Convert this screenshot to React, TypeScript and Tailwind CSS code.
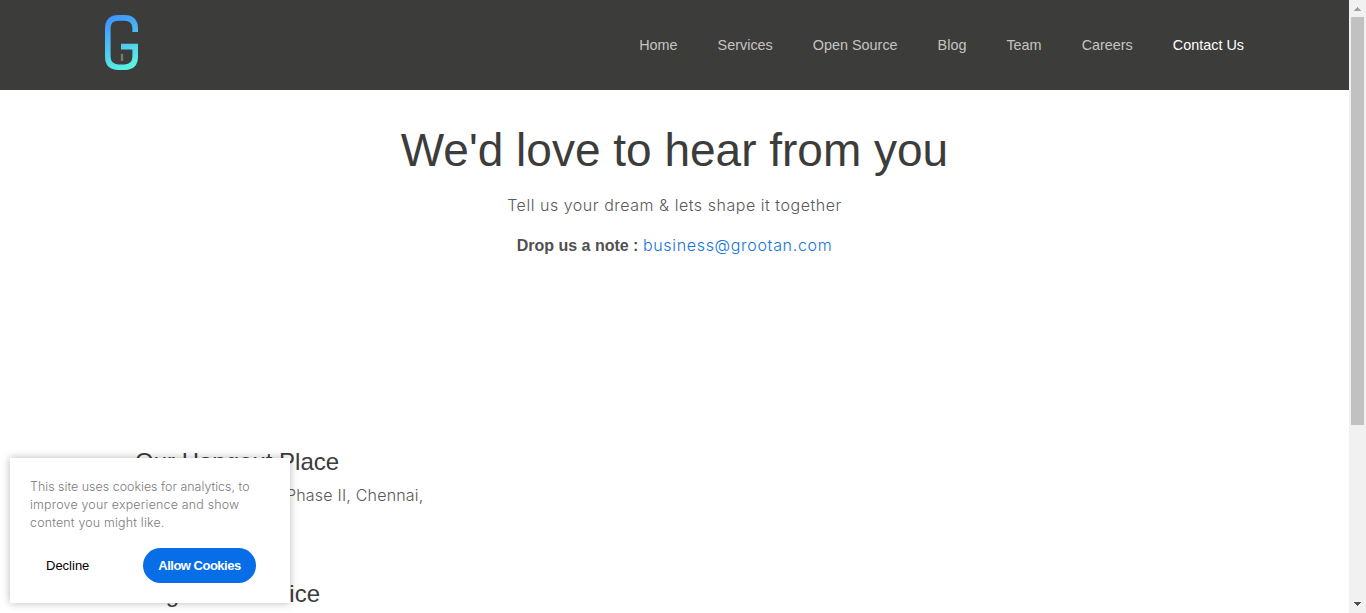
const navItems = ["Home", "Services", "Open Source", "Blog", "Team", "Careers"];

function Logo() {
  return (
    <svg width="34" height="56" viewBox="0 0 34 56" fill="none" aria-label="Grootan">
      <defs>
        <linearGradient id="logo" x1="6" y1="4" x2="30" y2="54" gradientUnits="userSpaceOnUse">
          <stop offset="0" stopColor="#4096ff" />
          <stop offset="1" stopColor="#5cfae0" />
        </linearGradient>
      </defs>
      <path
        d="M30.2 17V13.5Q30.2 2.9 19.6 2.9H13.4Q2.8 2.9 2.8 13.5V41.6Q2.8 52.2 13.4 52.2H19.6Q30.2 52.2 30.2 41.6V31.6H16"
        stroke="url(#logo)"
        strokeWidth="5.6"
      />
      <path d="M17 39V46" stroke="#777" strokeWidth="2.4" />
    </svg>
  );
}

function Header() {
  return (
    <header className="flex h-[90px] items-center justify-between bg-[#3c3c3a] pr-[105px] pl-[105px]">
      <div className="-mt-[5px]">
        <Logo />
      </div>
      <nav className="flex gap-10 text-[14.4px] leading-5 text-[#c4c4c3]">
        {navItems.map((label) => (
          <a key={label} className="whitespace-nowrap">
            {label}
          </a>
        ))}
        <a className="whitespace-nowrap text-white">Contact Us</a>
      </nav>
    </header>
  );
}

function Scrollbar() {
  return (
    <div className="flex h-full w-[17px] shrink-0 flex-col items-center bg-[#f1f1f1]">
      <svg width="17" height="17" viewBox="0 0 17 17" fill="#a3a3a3" shapeRendering="crispEdges">
        <path d="M8 7h1v1h1v1h1v1h1v1H5v-1h1V9h1V8h1z" />
      </svg>
      <div className="h-[408px] w-[13px] bg-[#c1c1c1]" />
      <svg className="mt-auto" width="17" height="17" viewBox="0 0 17 17" fill="#505050" shapeRendering="crispEdges">
        <path d="M5 6h7v1h-1v1h-1v1H9v1H8V9H7V8H6V7H5z" />
      </svg>
    </div>
  );
}

function CookieCard() {
  return (
    <aside className="absolute top-[458px] left-[10px] h-[145px] w-[280px] bg-white px-5 pt-5 shadow-[0_0_8px_rgba(0,0,0,0.28)]">
      <div className="font-['Inter','Liberation_Sans',sans-serif] text-[12.4px] leading-[18px] font-light whitespace-nowrap text-[#7b7b7b]">
        <p className="tracking-[0.03px]">This site uses cookies for analytics, to</p>
        <p className="tracking-[0.21px]">improve your experience and show</p>
        <p className="tracking-[0.2px]">content you might like.</p>
      </div>
      <div className="mt-4 flex items-center justify-between pr-[14px] pl-4 text-[13px]">
        <button className="text-black">Decline</button>
        <button className="h-[35px] w-[113px] rounded-full bg-[#086ee7] font-bold whitespace-nowrap text-white">
          <span className="tracking-[-0.5px]">Allow Cookies</span>
        </button>
      </div>
    </aside>
  );
}

export default function App() {
  return (
    <div className="relative flex h-[613px] w-[1366px] overflow-hidden bg-white font-['Liberation_Sans',Arial,sans-serif]">
      <div className="min-w-0 flex-1">
        <Header />
        <main>
          <section className="flex flex-col items-center pt-[30px] text-center">
            <h1 className="text-[46px] leading-[60px] whitespace-nowrap text-[#3c3c3a]">
              We&apos;d love to hear from you
            </h1>
            <p className="mt-[13px] font-['Inter','Liberation_Sans',sans-serif] text-[16px] leading-6 font-light tracking-[0.53px] text-[#5a5a58]">
              Tell us your dream &amp; lets shape it together
            </p>
            <p className="mt-4 text-[16px] leading-6 text-[#505050]">
              <b>Drop us a note : </b>
              <a className="font-['Inter','Liberation_Sans',sans-serif] font-light tracking-[0.68px] text-[#1673db]">
                business@grootan.com
              </a>
            </p>
          </section>
          <section className="mt-[189px] pl-[135px]">
            <h2 className="text-[24px] leading-[30px] text-[#3c3c3a]">Our Hangout Place</h2>
            <p className="mt-[6px] pl-[151px] font-['Inter','Liberation_Sans',sans-serif] text-[16px] leading-6 font-light tracking-[0.2px] text-[#5a5a58]">
              Phase II, Chennai,
            </p>
            <h2 className="mt-[72px] text-[24px] leading-[30px] text-[#3c3c3a]">Registered Office</h2>
          </section>
        </main>
      </div>
      <Scrollbar />
      <CookieCard />
    </div>
  );
}
